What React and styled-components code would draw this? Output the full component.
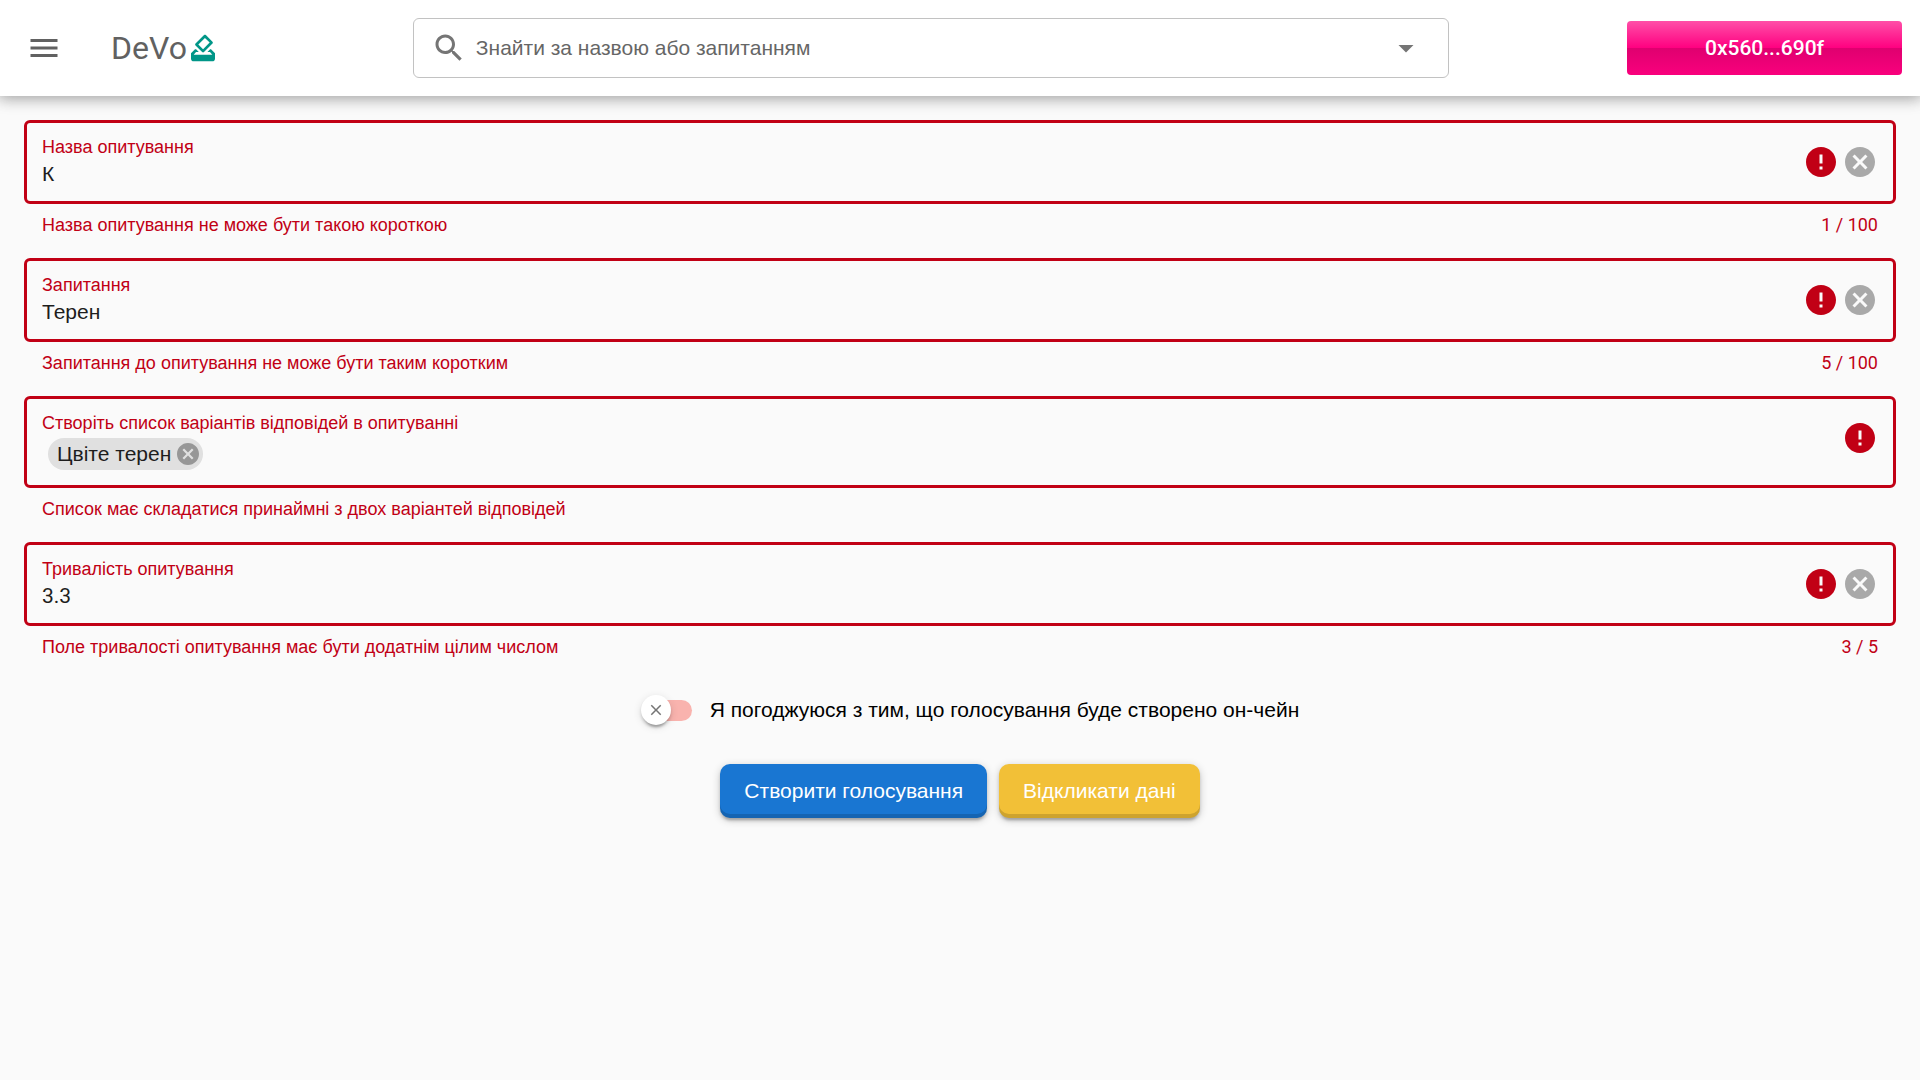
import React, { useState } from "react";
import styled, { createGlobalStyle } from "styled-components";

const latin = `Roboto, "Liberation Sans", sans-serif`;
const cyrillic = `"Liberation Sans", Arial, sans-serif`;
const red = "#c10015";

const GlobalStyle = createGlobalStyle`
  *, *::before, *::after { box-sizing: border-box; }
  body {
    margin: 0;
    min-height: 100vh;
    background: #fafafa;
    color: #000;
    font-family: ${cyrillic};
    font-size: 21px;
  }
  button, input { font: inherit; }
`;

const Header = styled.header`
  display: flex;
  align-items: center;
  justify-content: space-between;
  height: 96px;
  padding: 0 18px;
  background: #fff;
  color: #616161;
  box-shadow: 0 0 15px 3px rgba(0, 0, 0, 0.2), 0 0 15px rgba(0, 0, 0, 0.24);
`;

const HeaderStart = styled.div`
  display: flex;
  align-items: center;
  gap: 42px;
`;

const IconButton = styled.button`
  display: flex;
  align-items: center;
  justify-content: center;
  flex: none;
  padding: 0;
  border: 0;
  background: none;
  color: inherit;
  cursor: pointer;
`;

const MenuButton = styled(IconButton)`
  width: 51px;
  height: 51px;
`;

const Brand = styled.a`
  display: flex;
  align-items: center;
  padding-right: 16px;
  color: inherit;
  font-family: ${latin};
  font-size: 32px;
  line-height: 48px;
  text-decoration: none;
`;

const SearchBox = styled.div`
  display: flex;
  align-items: center;
  width: 55%;
  height: 60px;
  padding: 0 17px;
  border: 1px solid #c2c2c2;
  border-radius: 6px;
  color: #757575;
`;

const SearchInput = styled.input`
  flex: 1;
  min-width: 0;
  padding: 0 9px;
  border: 0;
  outline: 0;
  background: none;
  line-height: 36px;
  &::placeholder { color: #666; opacity: 1; }
`;

const ArrowButton = styled(IconButton)`
  width: 51px;
  height: 36px;
`;

const WalletButton = styled.button`
  width: 275px;
  height: 54px;
  border: 0;
  border-radius: 4px;
  background: linear-gradient(#ff4fa8, #ff0080 50%, #df006f 50%, #f9007d);
  color: #fff;
  font-family: ${latin};
  font-weight: 500;
  cursor: pointer;
`;

const Form = styled.form`
  display: flex;
  flex-direction: column;
  padding: 24px;
`;

const Field = styled.div`
  display: flex;
  flex-direction: column;
`;

const Control = styled.div`
  display: flex;
  align-items: flex-start;
  gap: 9px;
  padding: 12px 18px 12px 15px;
  border: 3px solid ${red};
  border-radius: 6px;
`;

const ControlBody = styled.div`
  display: flex;
  flex-direction: column;
  flex: 1;
  min-width: 0;
`;

const Label = styled.label`
  color: ${red};
  font-size: 18px;
  line-height: 24px;
`;

const ValueInput = styled.input`
  width: 100%;
  height: 30px;
  padding: 0;
  border: 0;
  outline: 0;
  background: none;
  color: #1d1d1d;
  font-family: ${(p) => (p.$numeric ? latin : cyrillic)};
`;

const ControlIcons = styled.div`
  display: flex;
  align-items: center;
  gap: 9px;
  height: 54px;
`;

const Helper = styled.div`
  display: flex;
  justify-content: space-between;
  height: 54px;
  padding: 12px 18px 0;
  color: ${red};
  font-size: 18px;
  line-height: 18px;
`;

const Counter = styled.span`
  font-family: ${latin};
`;

const Chips = styled.div`
  display: flex;
  align-items: center;
  gap: 6px;
  height: 38px;
  padding-left: 6px;
`;

const Chip = styled.span`
  display: flex;
  align-items: center;
  gap: 6px;
  height: 32px;
  padding: 0 4px 0 9px;
  border-radius: 16px;
  background: #e0e0e0;
  color: #1d1d1d;
`;

const ChipInput = styled(ValueInput)`
  flex: 1;
  width: auto;
`;

const Consent = styled.label`
  display: flex;
  align-items: center;
  justify-content: center;
  gap: 18px;
  height: 60px;
  padding-left: 20px;
  cursor: pointer;
`;

const Toggle = styled.span`
  display: grid;
  align-items: center;
  width: 51px;
  height: 30px;
  > * { grid-area: 1 / 1; }
`;

const ToggleInput = styled.input`
  width: 100%;
  height: 100%;
  margin: 0;
  opacity: 0;
  cursor: pointer;
`;

const Track = styled.span`
  height: 21px;
  margin-left: 6px;
  border-radius: 11px;
  background: ${(p) => (p.$on ? "#a6d8a8" : "#f9b3ae")};
`;

const Knob = styled.span`
  display: flex;
  align-items: center;
  justify-content: center;
  justify-self: ${(p) => (p.$on ? "end" : "start")};
  width: 30px;
  height: 30px;
  border-radius: 50%;
  background: #fff;
  color: #757575;
  box-shadow: 0 5px 2px -3px rgba(0, 0, 0, 0.2), 0 3px 3px rgba(0, 0, 0, 0.14),
    0 2px 8px rgba(0, 0, 0, 0.12);
`;

const Actions = styled.div`
  display: flex;
  justify-content: center;
  gap: 12px;
  padding-top: 24px;
`;

const ActionButton = styled.button`
  height: 54px;
  padding: 0 24px;
  border: 0;
  border-radius: 10px;
  color: #fff;
  background: ${(p) => (p.$tone === "primary" ? "#1976d2" : "#f2c037")};
  box-shadow: inset 0 -4px 0 rgba(0, 0, 0, 0.15), 0 2px 8px rgba(0, 0, 0, 0.2),
    0 3px 3px rgba(0, 0, 0, 0.14), 0 5px 2px -3px rgba(0, 0, 0, 0.12);
  cursor: pointer;
`;

const Glyph = ({ d, size, box = "0 0 24 24", color = "currentColor" }) => (
  <svg width={size} height={size} viewBox={box} fill={color} aria-hidden="true">
    <path d={d} />
  </svg>
);

const paths = {
  menu: "M3 18h18v-2H3v2zm0-5h18v-2H3v2zm0-7v2h18V6H3z",
  search:
    "M15.5 14h-.79l-.28-.27C15.41 12.59 16 11.11 16 9.5 16 5.91 13.09 3 9.5 3S3 5.91 3 9.5 5.91 16 9.5 16c1.61 0 3.09-.59 4.23-1.57l.27.28v.79l5 4.99L20.49 19l-4.99-5zm-6 0C7.01 14 5 11.99 5 9.5S7.01 5 9.5 5 14 7.01 14 9.5 11.99 14 9.5 14z",
  arrow: "M7 10l5 5 5-5z",
  error:
    "M12 2C6.48 2 2 6.48 2 12s4.48 10 10 10 10-4.48 10-10S17.52 2 12 2zm1 15h-2v-2h2v2zm0-4h-2V7h2v6z",
  cancel:
    "M12 2C6.47 2 2 6.47 2 12s4.47 10 10 10 10-4.47 10-10S17.53 2 12 2zm5 13.59L15.59 17 12 13.41 8.41 17 7 15.59 10.59 12 7 8.41 8.41 7 12 10.59 15.59 7 17 8.41 13.41 12 17 15.59z",
  close:
    "M19 6.41L17.59 5 12 10.59 6.41 5 5 6.41 10.59 12 5 17.59 6.41 19 12 13.41 17.59 19 19 17.59 13.41 12z",
  vote: "M18 13h-.68l-2 2h1.91L19 17H5l1.78-2h2.05l-2-2H6l-3 3v4c0 1.1.89 2 1.99 2H19c1.1 0 2-.89 2-2v-4l-3-3zm-1-5.05l-4.95 4.95-3.54-3.54 4.95-4.95L17 7.95zm-4.24-5.66L6.39 8.66c-.39.39-.39 1.02 0 1.41l4.95 4.95c.39.39 1.02.39 1.41 0l6.36-6.36c.39-.39.39-1.02 0-1.41L14.16 2.3c-.38-.4-1.01-.4-1.4-.01z",
};

function TextField({ id, label, initial, helper, max, numeric }) {
  const [value, setValue] = useState(initial);
  return (
    <Field>
      <Control>
        <ControlBody>
          <Label htmlFor={id}>{label}</Label>
          <ValueInput
            id={id}
            value={value}
            maxLength={max}
            $numeric={numeric}
            aria-invalid="true"
            aria-describedby={id + "-helper"}
            onChange={(e) => setValue(e.target.value)}
          />
        </ControlBody>
        <ControlIcons>
          <Glyph d={paths.error} size={30} box="2 2 20 20" color={red} />
          <IconButton type="button" aria-label="Очистити" onClick={() => setValue("")}>
            <Glyph d={paths.cancel} size={30} box="2 2 20 20" color="#a9a9a9" />
          </IconButton>
        </ControlIcons>
      </Control>
      <Helper id={id + "-helper"}>
        <span>{helper}</span>
        <Counter>{value.length} / {max}</Counter>
      </Helper>
    </Field>
  );
}

function ChipsField({ id, label, initial, helper }) {
  const [chips, setChips] = useState(initial);
  return (
    <Field>
      <Control>
        <ControlBody>
          <Label htmlFor={id}>{label}</Label>
          <Chips>
            {chips.map((chip) => (
              <Chip key={chip}>
                {chip}
                <IconButton
                  type="button"
                  aria-label="Видалити"
                  onClick={() => setChips(chips.filter((c) => c !== chip))}
                >
                  <Glyph d={paths.cancel} size={22} box="2 2 20 20" color="#979797" />
                </IconButton>
              </Chip>
            ))}
            <ChipInput id={id} aria-invalid="true" aria-describedby={id + "-helper"} />
          </Chips>
        </ControlBody>
        <ControlIcons>
          <Glyph d={paths.error} size={30} box="2 2 20 20" color={red} />
        </ControlIcons>
      </Control>
      <Helper id={id + "-helper"}>{helper}</Helper>
    </Field>
  );
}

export default function App() {
  const [agreed, setAgreed] = useState(false);
  return (
    <>
      <GlobalStyle />
      <Header>
        <HeaderStart>
          <MenuButton type="button" aria-label="Меню">
            <Glyph d={paths.menu} size={36} />
          </MenuButton>
          <Brand href="#">
            DeVo
            <Glyph d={paths.vote} size={32} color="#009688" />
          </Brand>
        </HeaderStart>
        <SearchBox>
          <Glyph d={paths.search} size={36} />
          <SearchInput
            aria-label="Знайти за назвою або запитанням"
            placeholder="Знайти за назвою або запитанням"
          />
          <ArrowButton type="button" aria-label="Показати варіанти">
            <Glyph d={paths.arrow} size={36} />
          </ArrowButton>
        </SearchBox>
        <WalletButton type="button">0x560...690f</WalletButton>
      </Header>
      <main>
        <Form onSubmit={(e) => e.preventDefault()}>
          <TextField
            id="title"
            label="Назва опитування"
            initial="К"
            helper="Назва опитування не може бути такою короткою"
            max={100}
          />
          <TextField
            id="question"
            label="Запитання"
            initial="Терен"
            helper="Запитання до опитування не може бути таким коротким"
            max={100}
          />
          <ChipsField
            id="options"
            label="Створіть список варіантів відповідей в опитуванні"
            initial={["Цвіте терен"]}
            helper="Список має складатися принаймні з двох варіантей відповідей"
          />
          <TextField
            id="duration"
            label="Тривалість опитування"
            initial="3.3"
            helper="Поле тривалості опитування має бути додатнім цілим числом"
            max={5}
            numeric
          />
          <Consent>
            <Toggle>
              <Track $on={agreed} />
              <Knob $on={agreed}>
                <Glyph d={paths.close} size={18} />
              </Knob>
              <ToggleInput
                type="checkbox"
                role="switch"
                checked={agreed}
                onChange={(e) => setAgreed(e.target.checked)}
              />
            </Toggle>
            Я погоджуюся з тим, що голосування буде створено он-чейн
          </Consent>
          <Actions>
            <ActionButton type="submit" $tone="primary">Створити голосування</ActionButton>
            <ActionButton type="reset" $tone="warning">Відкликати дані</ActionButton>
          </Actions>
        </Form>
      </main>
    </>
  );
}
